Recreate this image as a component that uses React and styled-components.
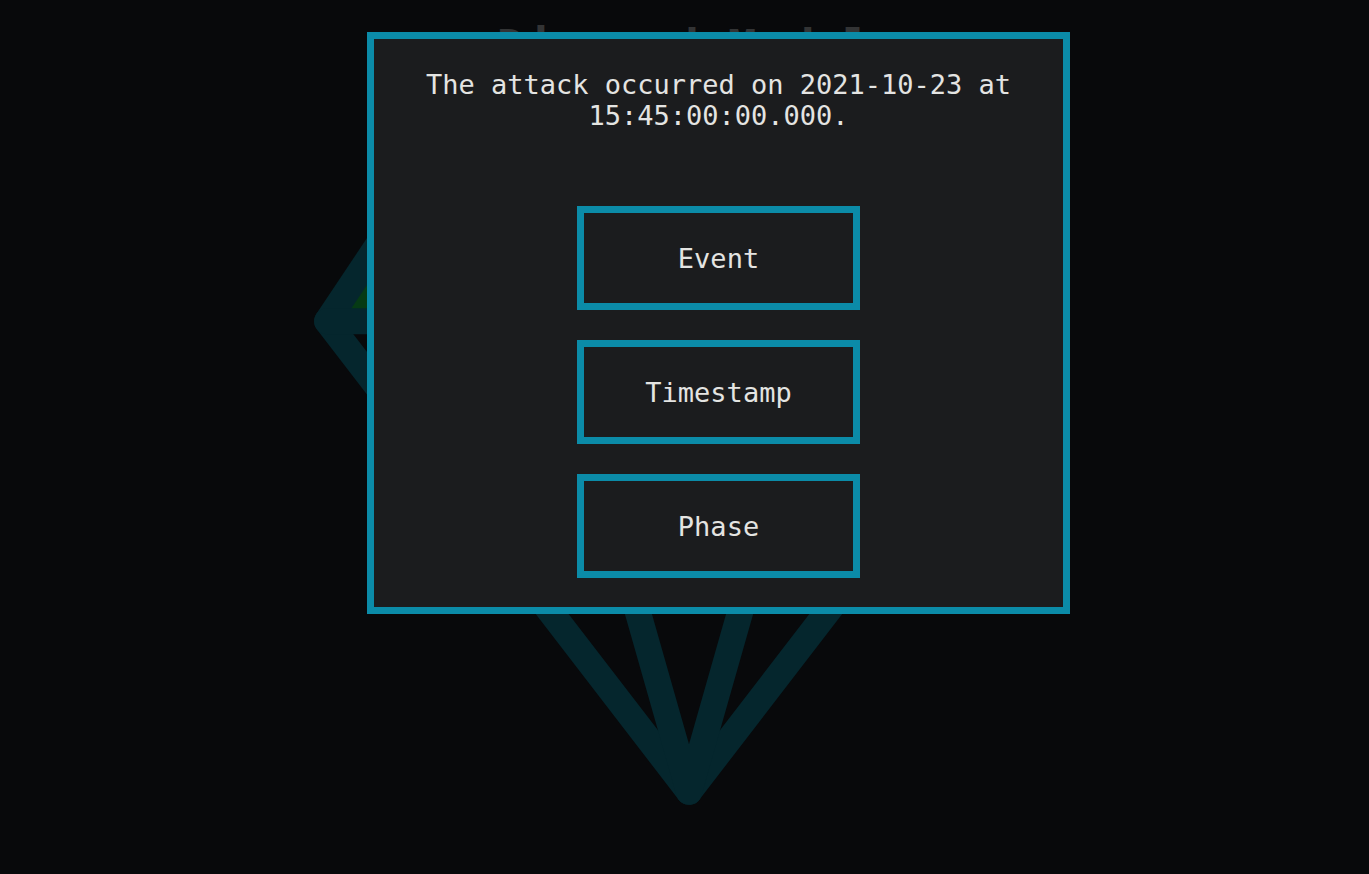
import React from 'react';
import styled, { createGlobalStyle } from 'styled-components';

const GlobalStyle = createGlobalStyle`
  html, body {
    margin: 0;
    padding: 0;
    background: #08090b;
    overflow: hidden;
  }
  * {
    box-sizing: border-box;
  }
`;

const Page = styled.div`
  position: relative;
  width: 100vw;
  height: 100vh;
  display: flex;
  flex-direction: column;
  align-items: center;
  padding-top: 19px;
  font-family: 'DejaVu Sans Mono', 'Liberation Mono', monospace;
`;

const Title = styled.h1`
  margin: 0;
  font-size: 48px;
  font-weight: bold;
  line-height: normal;
  color: #333435;
`;

const Gem = styled.svg`
  display: block;
  margin-top: 11px;
  margin-left: 9px;
  width: 760px;
  height: 724px;
`;

const Modal = styled.div`
  position: absolute;
  top: 32px;
  left: 367px;
  width: 703px;
  height: 582px;
  background: #1b1c1e;
  border: 7px solid #0b8ba8;
  display: flex;
  flex-direction: column;
  align-items: center;
  padding: 30px 40px 28px;
`;

const Message = styled.p`
  margin: 0 0 75px;
  font-size: 27px;
  line-height: normal;
  text-align: center;
  color: #e4e4e2;
`;

const Options = styled.div`
  display: flex;
  flex-direction: column;
  gap: 30px;
`;

const OptionButton = styled.button`
  width: 283px;
  height: 104px;
  background: #1b1c1e;
  border: 7px solid #0b8ba8;
  border-radius: 0;
  color: #e4e4e2;
  font-family: 'DejaVu Sans Mono', 'Liberation Mono', monospace;
  font-size: 27px;
  cursor: pointer;
  padding: 0;
`;

function App() {
  return (
    <>
      <GlobalStyle />
      <Page>
        <Title>Diamond Model</Title>
        <Gem viewBox="1.5 2.5 21 20" fill="none">
          <polygon points="2,9 6,3 11,3 8.3,9" fill="#063a14" />
          <g stroke="#05262d" strokeWidth="0.72" strokeLinecap="round" strokeLinejoin="round">
            <path d="M6 3h12l4 6-10 13L2 9Z" />
            <path d="M11 3 8.3 9 12 22l3.7-13-2.7-6" />
            <path d="M2 9h20" />
          </g>
        </Gem>
        <Modal>
          <Message>The attack occurred on 2021-10-23 at 15:45:00:00.000.</Message>
          <Options>
            <OptionButton>Event</OptionButton>
            <OptionButton>Timestamp</OptionButton>
            <OptionButton>Phase</OptionButton>
          </Options>
        </Modal>
      </Page>
    </>
  );
}

export default App;
